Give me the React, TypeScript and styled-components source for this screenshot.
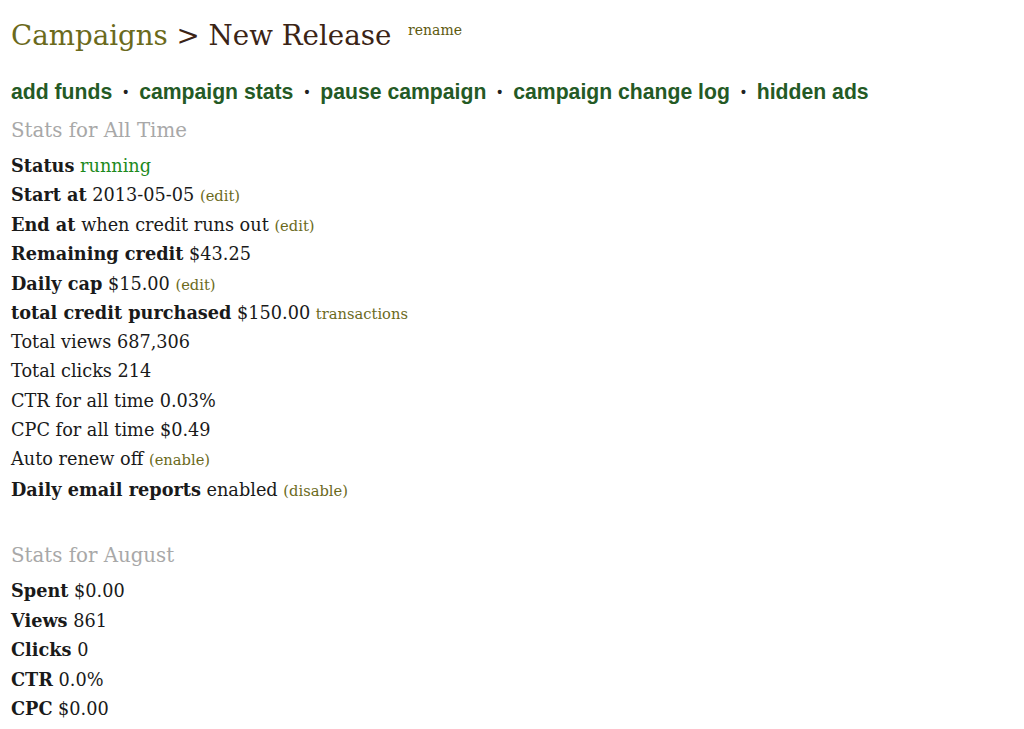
import React, { FC } from "react"
import styled, { createGlobalStyle } from "styled-components"

const GlobalStyle = createGlobalStyle`
  body {
    margin: 0;
    background: #fff;
    font-family: "DejaVu Serif", Georgia, serif;
    color: #1a1a1a;
  }
`

interface IRow {
  label?: string
  value?: string
  bold?: boolean
  action?: string
  valueTone?: "plain" | "good"
}

const allTime: IRow[] = [
  { label: "Status", value: "running", bold: true, valueTone: "good" },
  { label: "Start at", value: "2013-05-05", bold: true, action: "(edit)" },
  { label: "End at", value: "when credit runs out", bold: true, action: "(edit)" },
  { label: "Remaining credit", value: "$43.25", bold: true },
  { label: "Daily cap", value: "$15.00", bold: true, action: "(edit)" },
  { label: "total credit purchased", value: "$150.00", bold: true, action: "transactions" },
  { label: "Total views", value: "687,306" },
  { label: "Total clicks", value: "214" },
  { label: "CTR for all time", value: "0.03%" },
  { label: "CPC for all time", value: "$0.49" },
  { label: "Auto renew", value: "off", action: "(enable)" },
  { label: "Daily email reports", value: "enabled", bold: true, action: "(disable)" },
]

const august: IRow[] = [
  { label: "Spent", value: "$0.00", bold: true },
  { label: "Views", value: "861", bold: true },
  { label: "Clicks", value: "0", bold: true },
  { label: "CTR", value: "0.0%", bold: true },
  { label: "CPC", value: "$0.00", bold: true },
]

const navLinks = ["add funds", "campaign stats", "pause campaign", "campaign change log", "hidden ads"]

const StatRow: FC<{ row: IRow }> = ({ row }) => (
  <Row>
    <Label bold={row.bold}>{row.label}</Label> <Value tone={row.valueTone || "plain"}>{row.value}</Value>
    {row.action && (
      <>
        {" "}
        <Action>{row.action}</Action>
      </>
    )}
  </Row>
)

export default function App() {
  return (
    <Page>
      <GlobalStyle />
      <Title>
        <Crumb>Campaigns</Crumb> &gt; New Release <Rename>rename</Rename>
      </Title>
      <Nav>
        {navLinks.map((l, i) => (
          <React.Fragment key={l}>
            {i > 0 && <Dot>•</Dot>}
            <NavLink>{l}</NavLink>
          </React.Fragment>
        ))}
      </Nav>
      <Section>
        <Heading>Stats for All Time</Heading>
        {allTime.map(r => (
          <StatRow key={r.label} row={r} />
        ))}
      </Section>
      <Section spaced>
        <Heading>Stats for August</Heading>
        {august.map(r => (
          <StatRow key={r.label} row={r} />
        ))}
      </Section>
    </Page>
  )
}

//---------------------------STYLES-------------------------------------------//

const Page = styled.div`
  padding: 16px 11px 0;
  display: flex;
  flex-direction: column;
`

const Title = styled.h1`
  margin: 0;
  font-size: 27.7px;
  font-weight: normal;
  color: #3b2416;
  line-height: 40px;
`

const Crumb = styled.span`
  color: #6b6a1c;
`

const Rename = styled.span`
  font-size: 14px;
  line-height: 1;
  color: #5e5a10;
  vertical-align: 10px;
  margin-left: 8px;
`

const Nav = styled.div`
  display: flex;
  align-items: center;
  gap: 11px;
  margin-top: 23px;
  margin-bottom: 11px;
  font-family: "Liberation Sans", Arial, sans-serif;
  font-weight: bold;
  font-size: 21.2px;
  line-height: 26px;
  color: #245a25;
`

const NavLink = styled.span``

const Dot = styled.span`
  font-size: 14px;
  color: #222;
`

const Section = styled.div<{ spaced?: boolean }>`
  display: flex;
  flex-direction: column;
  margin-top: ${p => (p.spaced ? "37px" : "0")};
`

const Heading = styled.div`
  font-size: 19.8px;
  color: #a8a8a8;
  line-height: 30px;
  margin-bottom: 5px;
`

const Row = styled.div`
  font-size: 17.7px;
  line-height: 29.45px;
  height: 29.45px;
  white-space: nowrap;
`

const Label = styled.span<{ bold?: boolean }>`
  font-weight: ${p => (p.bold ? "bold" : "normal")};
  color: #1a1a1a;
`

const Value = styled.span<{ tone: "plain" | "good" }>`
  color: ${p => (p.tone === "good" ? "#1d8a1d" : "#1a1a1a")};
`

const Action = styled.span`
  font-size: 14.7px;
  line-height: 1;
  color: #6b6a1c;
`
